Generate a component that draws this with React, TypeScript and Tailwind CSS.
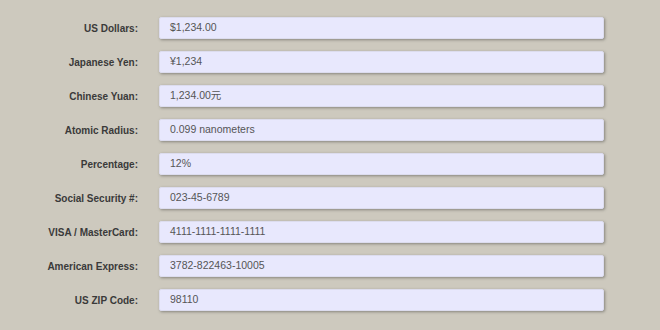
const rows: [string, string][] = [
  ["US Dollars:", "$1,234.00"],
  ["Japanese Yen:", "¥1,234"],
  ["Chinese Yuan:", "1,234.00元"],
  ["Atomic Radius:", "0.099 nanometers"],
  ["Percentage:", "12%"],
  ["Social Security #:", "023-45-6789"],
  ["VISA / MasterCard:", "4111-1111-1111-1111"],
  ["American Express:", "3782-822463-10005"],
  ["US ZIP Code:", "98110"],
];

export default function App() {
  return (
    <div
      className="w-[660px] h-[330px] bg-[#cdc9be] pt-[17px] flex flex-col gap-[12px]"
      style={{ fontFamily: '"Liberation Sans", Arial, "Noto Sans CJK SC", sans-serif' }}
    >
      {rows.map(([label, value]) => (
        <div key={label} className="flex items-center">
          <label className="w-[138px] text-right text-[10px] font-bold text-[#3a3a3a]">{label}</label>
          <div className="ml-[21px] w-[445px] h-[22px] flex items-center px-[10px] bg-[#e8e8fd] rounded-[2px] border border-[#dcdcee] shadow-[1px_1px_3px_rgba(0,0,0,0.35)] text-[10.5px] text-[#555]">
            {value}
          </div>
        </div>
      ))}
    </div>
  );
}
